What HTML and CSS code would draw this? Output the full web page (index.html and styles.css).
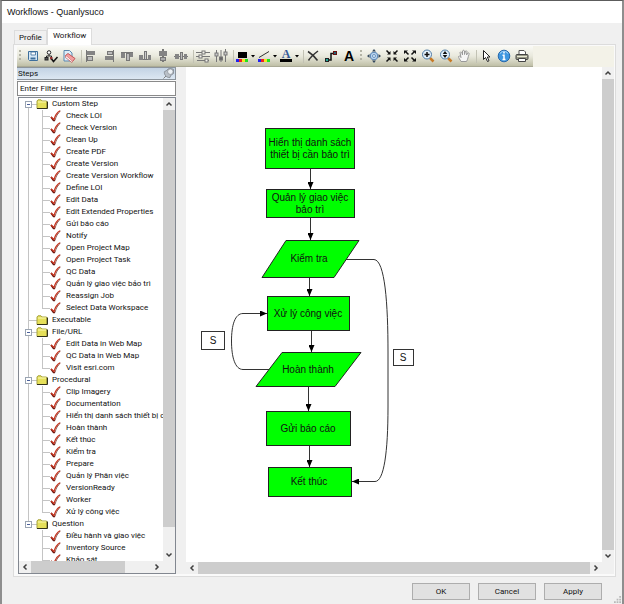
FILE: index.html
```html
<!DOCTYPE html>
<html lang="vi">
<head>
<meta charset="utf-8">
<meta name="viewport" content="width=device-width, initial-scale=1">
<title>Workflows - Quanlysuco</title>
<link rel="stylesheet" href="styles.css">
</head>
<body>
	<!-- shared icons -->
	<svg class="defs" width="0" height="0">
		<symbol id="check" viewBox="0 0 11 12">
			<path d="M1 7 L3.500 10.500 L5 10.500" fill="none" stroke="#5a1410" stroke-width="1.500"/>
			<path d="M1 7 L4 9.500 C5 6 7 2.500 10 .8" fill="none" stroke="#c8321c" stroke-width="1.300"/>
			<path d="M5 10.500 C6 6.500 7.500 3.500 10.500 1" fill="none" stroke="#6b2318" stroke-width=".7"/>
		</symbol>
		<symbol id="folder" viewBox="0 0 12 10">
			<path d="M1 9.500 V2 L2 .8 H5 L6 2 H10.500 V9" fill="#e6e05a" stroke="#a8a440" stroke-width="1"/>
			<path d="M2 3 H10" stroke="#fbf9b0"/>
			<path d="M1 9.500 H11.500 V2.500" fill="none" stroke="#33321a"/>
		</symbol>
		<symbol id="up" viewBox="0 0 12 12"><path d="M3.500 7.500 L6 5 L8.500 7.500" fill="none" stroke="#404040" stroke-width="1.500"/></symbol>
		<symbol id="down" viewBox="0 0 12 12"><path d="M3.500 4.500 L6 7 L8.500 4.500" fill="none" stroke="#404040" stroke-width="1.500"/></symbol>
		<symbol id="left" viewBox="0 0 12 12"><path d="M7.500 3.500 L5 6 L7.500 8.500" fill="none" stroke="#404040" stroke-width="1.500"/></symbol>
		<symbol id="right" viewBox="0 0 12 12"><path d="M4.500 3.500 L7 6 L4.500 8.500" fill="none" stroke="#404040" stroke-width="1.500"/></symbol>
	</svg>

	<div class="window">
		<h1 class="title">Workflows - Quanlysuco</h1>

		<div class="tabs" role="tablist">
			<button class="tab" role="tab">Profile</button>
			<button class="tab active" role="tab" aria-selected="true">Workflow</button>
		</div>

		<div class="page">
			<div class="toolbarRow">
			<div class="toolbar" role="toolbar">
				<span class="grip"></span>
				<button aria-label="Save"><svg viewBox="0 0 14 14"><path d="M2.500 2.500 H11.500 V11.500 H3.500 L2.500 10.500 Z" fill="#d5e7f5" stroke="#3d6f9c"/><path d="M5 3 H9.500 V6 H5 Z" fill="#fff" stroke="#3d6f9c" stroke-width=".8"/><path d="M4.500 9.500 H9.500" stroke="#3d6f9c" stroke-width="2"/></svg></button>
				<button aria-label="Validate"><svg viewBox="0 0 14 14"><circle cx="5" cy="3.500" r="1.800" fill="#fff" stroke="#222"/><path d="M5 5.500 V7 M2.500 9 V7 H7.500 V9" fill="none" stroke="#222"/><rect x="1" y="8.500" width="3" height="2.500" fill="#555" stroke="#222"/><rect x="6" y="8" width="2.500" height="2.500" fill="#933"/><path d="M7.500 10 L9.500 12.500 L13.500 8" fill="none" stroke="#111" stroke-width="1.500"/></svg></button>
				<button aria-label="Erase"><svg viewBox="0 0 14 14"><path d="M2 1.500 H7.500 L10 4 V12 H2 Z" fill="#dcecf8" stroke="#5b87ae"/><path d="M3.500 6.500 L6 4.500 L13 9.500 L10.500 12.500 Z" fill="#f3a0a0" stroke="#bf4a4a" stroke-width=".9"/><path d="M3.500 6.500 V8.500 L10 13.500 L10.500 12.500" fill="#fff" stroke="#bf4a4a" stroke-width=".7"/></svg></button>
				<span class="sep"></span>
				<button aria-label="Align left"><svg viewBox="0 0 14 14"><path d="M2.500 1 V13" stroke="#777"/><rect x="3" y="2" width="8" height="4" fill="#848484"/><rect x="3.500" y="7.500" width="5" height="4" fill="#bbb" stroke="#777"/></svg></button>
				<button aria-label="Align right"><svg viewBox="0 0 14 14"><path d="M11.500 1 V13" stroke="#777"/><rect x="5.500" y="2.500" width="5" height="3" fill="#bbb" stroke="#777"/><rect x="3" y="7" width="8" height="4" fill="#848484"/></svg></button>
				<button aria-label="Align top"><svg viewBox="0 0 14 14"><path d="M1 3.500 H13" stroke="#777"/><rect x="1" y="4" width="4" height="5" fill="#848484"/><rect x="6.500" y="4.500" width="3" height="7" fill="#bbb" stroke="#777"/><rect x="10" y="4" width="3" height="4" fill="#848484"/></svg></button>
				<button aria-label="Align bottom"><svg viewBox="0 0 14 14"><path d="M1 10.500 H13" stroke="#777"/><rect x="1" y="6" width="4" height="5" fill="#848484"/><rect x="6.500" y="2.500" width="2" height="8" fill="#ccc" stroke="#777"/><rect x="10" y="6" width="3" height="5" fill="#848484"/></svg></button>
				<button aria-label="Align centre"><svg viewBox="0 0 14 14"><path d="M7 0 V13" stroke="#777" stroke-width="2"/><rect x="3" y="2" width="8" height="5" fill="#848484"/><rect x="4.500" y="8.500" width="5" height="3" fill="#aaa" stroke="#777"/></svg></button>
				<button aria-label="Align middle"><svg viewBox="0 0 14 14"><path d="M0 7.500 H14" stroke="#777"/><rect x="1" y="5" width="4" height="5" fill="#848484"/><rect x="6.500" y="3.500" width="2" height="7" fill="#bbb" stroke="#777"/><rect x="10" y="5" width="3" height="5" fill="#848484"/></svg></button>
				<span class="sep"></span>
				<button aria-label="Space horizontally"><svg viewBox="0 0 14 14"><g stroke="#777" fill="#f4f4ec"><path d="M0 3.500 H14 M0 7.500 H14 M1 11.500 H13"/><rect x="6" y="2" width="3" height="3"/><rect x="3" y="6" width="3" height="3"/><rect x="9" y="10" width="3" height="3"/></g></svg></button>
				<button aria-label="Space vertically"><svg viewBox="0 0 14 14"><g stroke="#777" fill="#ccc"><path d="M2.500 1 V13 M7 1 V13 M11.500 0 V13"/><rect x="1" y="4" width="3" height="3"/><rect x="5.500" y="8" width="3" height="3" fill="#666"/><rect x="10" y="3" width="3" height="3"/></g></svg></button>
				<span class="sep"></span>
				<button class="drop" aria-label="Fill colour"><svg viewBox="0 0 20 14"><rect x="3" y="3" width="9" height="6"/><rect x="1" y="10" width="3" height="3" fill="#2020f0"/><rect x="4" y="10" width="3" height="3" fill="#f02020"/><rect x="7" y="10" width="3" height="3" fill="#f0e820"/><rect x="10" y="10" width="3" height="3" fill="#20e020"/><path d="M16 6 H20 L18 8.500 Z"/></svg></button>
				<button class="drop" aria-label="Line colour"><svg viewBox="0 0 20 14"><path d="M2 8.500 L12 2.500" stroke="#333"/><rect x="1" y="10" width="3" height="3" fill="#2020f0"/><rect x="4" y="10" width="3" height="3" fill="#f02020"/><rect x="7" y="10" width="3" height="3" fill="#f0e820"/><rect x="10" y="10" width="3" height="3" fill="#20e020"/><path d="M16 6 H20 L18 8.500 Z"/></svg></button>
				<button class="drop" aria-label="Font colour"><svg viewBox="0 0 20 14"><text class="glyph" x="7" y="9" fill="#355a98">A</text><rect x="1" y="10" width="12" height="3"/><path d="M16 6 H20 L18 8.500 Z"/></svg></button>
				<span class="sep"></span>
				<button aria-label="Delete"><svg viewBox="0 0 14 14"><path d="M2 2.500 C6 5 9 8 11.500 11.500 M12 2 C8 5 4 9 2.500 11.500" fill="none" stroke="#333" stroke-width="1.500"/></svg></button>
				<button aria-label="Connector"><svg viewBox="0 0 14 14"><path d="M4 11 H7 V4.500 H10" fill="none" stroke="#111" stroke-width="1.500"/><rect x="1.500" y="9.500" width="3" height="3" fill="#2a9" stroke="#222"/><rect x="9.500" y="2.500" width="3" height="3" fill="#267" stroke="#611"/></svg></button>
				<button aria-label="Text"><svg viewBox="0 0 14 14"><text class="glyph big" x="7" y="12">A</text></svg></button>
				<span class="grip"></span>
				<button aria-label="Full extent"><svg viewBox="0 0 14 14"><circle cx="7" cy="7" r="3.800" fill="#b9d4ee" stroke="#5481b4"/><circle cx="7" cy="7" r="1.500" fill="#e4f1fb" stroke="#5481b4" stroke-width=".8"/><path d="M7 0 L9 2.500 H5 Z M7 14 L9 11.500 H5 Z M0 7 L2.500 5 V9 Z M14 7 L11.500 5 V9 Z" fill="#34485c"/></svg></button>
				<button aria-label="Fixed zoom in"><svg viewBox="0 0 14 14"><path d="M1.500 1.500 L4 4 M12.500 1.500 L10 4 M1.500 12.500 L4 10 M12.500 12.500 L10 10" stroke="#111" stroke-width="1.500"/><path d="M2 5.500 H5.500 V2 Z M12 5.500 H8.500 V2 Z M2 8.500 H5.500 V12 Z M12 8.500 H8.500 V12 Z" fill="#111"/></svg></button>
				<button aria-label="Fixed zoom out"><svg viewBox="0 0 14 14"><path d="M3 3 L5.500 5.500 M11 3 L8.500 5.500 M3 11 L5.500 8.500 M11 11 L8.500 8.500" stroke="#111" stroke-width="1.500"/><path d="M1 1.500 H5 L1 5 Z M13 1.500 H9 L13 5 Z M1 12.500 H5 L1 9 Z M13 12.500 H9 L13 9 Z" fill="#111"/></svg></button>
				<button aria-label="Zoom in"><svg viewBox="0 0 14 14"><path d="M9 9 L12.500 12.500" stroke="#c77a26" stroke-width="2.500"/><circle cx="6" cy="5.500" r="4.500" fill="#e3f1fb" stroke="#4f7ba6"/><path d="M3.500 5.500 H8.500 M6 3 V8" stroke="#111" stroke-width="1.500"/></svg></button>
				<button aria-label="Zoom"><svg viewBox="0 0 14 14"><path d="M9 9 L12.500 12.500" stroke="#c77a26" stroke-width="2.500"/><circle cx="6" cy="5.500" r="4.500" fill="#e3f1fb" stroke="#4f7ba6"/><path d="M6 2 L8.300 5 H3.700 Z M6 9 L8.300 6 H3.700 Z" fill="#111"/></svg></button>
				<button aria-label="Pan"><svg viewBox="0 0 14 14"><path d="M4 12.500 C3 10.500 1.500 9 1.500 7.500 C2.500 6.500 3.500 7.500 4 8.500 L3 3.500 C3.500 2.500 4.500 3 5 4 L5.500 6 L5.500 2 C6 1 7 1 7.500 2 V5.500 L8.500 2 C9.500 1.500 10 2 10 3 L9.500 6 L11 4 C12 3.500 12.500 4.500 12 5.500 C11 8 11 10 9.500 12.500 Z" fill="#f6f6f6" stroke="#999"/></svg></button>
				<span class="sep"></span>
				<button aria-label="Select"><svg viewBox="0 0 14 14"><path d="M4.500 1.500 V10.500 L6.500 8.500 L8.500 12.500 L10 11.800 L8.300 8 H11 Z" fill="#fff" stroke="#222"/></svg></button>
				<button aria-label="Information"><svg viewBox="0 0 14 14"><circle cx="7" cy="7" r="5.800" fill="#3e97e0" stroke="#2668ab"/><path d="M3 4.500 C5 1.500 9 1.500 11 4.500" fill="none" stroke="#a5d4f8" stroke-width="1.200"/><path d="M7 3 V4.500 M5.500 6.200 H7 V10.500 M5.500 10.500 H8.500" fill="none" stroke="#fff" stroke-width="1.500"/></svg></button>
				<button aria-label="Print"><svg viewBox="0 0 14 14"><path d="M4 6 V1.500 H9 L10.500 3 V6" fill="#fff" stroke="#555"/><rect x="1" y="5.500" width="12" height="5" rx="1" fill="#999a88" stroke="#444"/><path d="M2 7.500 H12" stroke="#e7e7d4"/><path d="M3.500 9.500 H10.500 V12.500 H3.500 Z" fill="#fff" stroke="#444"/></svg></button>
			</div>
			</div>

			<div class="main">
				<div class="steps">
					<div class="stepsHead">
						<h2>Steps</h2>
						<svg class="pin" viewBox="0 0 13 12"><path d="M1 11.500 L4 8.500" stroke="#777"/><path d="M2 4 C1.500 7 4 10.500 8 10.500 L9 8 L12 6 V1.500 L10 .8 H6.500 L4 3 Z" fill="#b9c0c8" stroke="#858c94"/><circle cx="8.500" cy="4" r="3" fill="#eef2f6" stroke="#858c94" stroke-width=".8"/></svg>
					</div>
					<input class="filter" type="text" value="Enter Filter Here" aria-label="Filter">
					<div class="treeBox">
						<div class="treeRow">
							<ul class="tree">
								<li><details open>
									<summary><i></i><svg class="folder"><use href="#folder"/></svg>Custom Step</summary>
									<ul>
										<li><svg><use href="#check"/></svg>Check LOI</li>
										<li><svg><use href="#check"/></svg>Check Version</li>
										<li><svg><use href="#check"/></svg>Clean Up</li>
										<li><svg><use href="#check"/></svg>Create PDF</li>
										<li><svg><use href="#check"/></svg>Create Version</li>
										<li><svg><use href="#check"/></svg>Create Version Workflow</li>
										<li><svg><use href="#check"/></svg>Define LOI</li>
										<li><svg><use href="#check"/></svg>Edit Data</li>
										<li><svg><use href="#check"/></svg>Edit Extended Properties</li>
										<li><svg><use href="#check"/></svg>Gửi báo cáo</li>
										<li><svg><use href="#check"/></svg>Notify</li>
										<li><svg><use href="#check"/></svg>Open Project Map</li>
										<li><svg><use href="#check"/></svg>Open Project Task</li>
										<li><svg><use href="#check"/></svg>QC Data</li>
										<li><svg><use href="#check"/></svg>Quản lý giao việc bảo trì</li>
										<li><svg><use href="#check"/></svg>Reassign Job</li>
										<li><svg><use href="#check"/></svg>Select Data Workspace</li>
									</ul>
								</details></li>
								<li><div class="leaf"><svg class="folder"><use href="#folder"/></svg>Executable</div></li>
								<li><details open>
									<summary><i></i><svg class="folder"><use href="#folder"/></svg>File/URL</summary>
									<ul>
										<li><svg><use href="#check"/></svg>Edit Data in Web Map</li>
										<li><svg><use href="#check"/></svg>QC Data in Web Map</li>
										<li><svg><use href="#check"/></svg>Visit esri.com</li>
									</ul>
								</details></li>
								<li><details open>
									<summary><i></i><svg class="folder"><use href="#folder"/></svg>Procedural</summary>
									<ul>
										<li><svg><use href="#check"/></svg>Clip Imagery</li>
										<li><svg><use href="#check"/></svg>Documentation</li>
										<li><svg><use href="#check"/></svg>Hiển thị danh sách thiết bị cần bảo trì</li>
										<li><svg><use href="#check"/></svg>Hoàn thành</li>
										<li><svg><use href="#check"/></svg>Kết thúc</li>
										<li><svg><use href="#check"/></svg>Kiểm tra</li>
										<li><svg><use href="#check"/></svg>Prepare</li>
										<li><svg><use href="#check"/></svg>Quản lý Phân việc</li>
										<li><svg><use href="#check"/></svg>VersionReady</li>
										<li><svg><use href="#check"/></svg>Worker</li>
										<li><svg><use href="#check"/></svg>Xử lý công việc</li>
									</ul>
								</details></li>
								<li><details open>
									<summary><i></i><svg class="folder"><use href="#folder"/></svg>Question</summary>
									<ul>
										<li><svg><use href="#check"/></svg>Điều hành và giao việc</li>
										<li><svg><use href="#check"/></svg>Inventory Source</li>
										<li><svg><use href="#check"/></svg>Khảo sát</li>
									</ul>
								</details></li>
							</ul>
							<div class="vbar treeV">
								<button aria-label="Scroll up"><svg><use href="#up"/></svg></button>
								<span class="thumb"></span>
								<button aria-label="Scroll down"><svg><use href="#down"/></svg></button>
							</div>
						</div>
						<div class="hbar treeH">
							<button aria-label="Scroll left"><svg><use href="#left"/></svg></button>
							<span class="thumb"></span>
							<button aria-label="Scroll right"><svg><use href="#right"/></svg></button>
						</div>
					</div>
				</div>

				<div class="canvas">
					<div class="canvasRow">
						<div class="sheet">
							<svg class="diagram" width="240" height="440">
								<defs>
									<marker id="arrow" viewBox="0 0 7 6" refX="7" refY="3" markerWidth="7" markerHeight="6" markerUnits="userSpaceOnUse" orient="auto"><path d="M0 0 L7 3 L0 6 Z"/></marker>
								</defs>
								<!-- connectors -->
								<g class="link">
									<path d="M124.500 101 V122"/>
									<path d="M124.500 150 V173"/>
									<path d="M123.500 210 V229"/>
									<path d="M125.500 263 V285"/>
									<path d="M122.500 319 V344"/>
									<path d="M123.500 378 V400"/>
									<path d="M160 192.500 H188 C199 193 202 237 202 285 V340 C202 385 198 414.500 189 414.500 H166"/>
									<path d="M84 302.500 H57 C49 302.500 45.500 290 45.500 274 C45.500 258 49 246.500 57 246.500 H81"/>
								</g>
								<!-- steps -->
								<g class="node">
									<rect x="79.500" y="61.500" width="89" height="40"/>
									<rect x="80.500" y="122.500" width="88" height="28"/>
									<polygon points="100,173.500 173,173.500 148,210.500 76,210.500"/>
									<rect x="81.500" y="229.500" width="82" height="34"/>
									<polygon points="96,285.500 175,285.500 149,319.500 70,319.500"/>
									<rect x="80.500" y="344.500" width="84" height="34"/>
									<rect x="82.500" y="400.500" width="83" height="29"/>
								</g>
								<g class="tag">
									<rect x="15.500" y="264.500" width="23" height="18"/>
									<rect x="207.500" y="282.500" width="20" height="16"/>
								</g>
								<g class="label">
									<text x="124" y="79">Hiển thị danh sách</text>
									<text x="124" y="91">thiết bị cần bảo trì</text>
									<text x="124" y="134">Quản lý giao việc</text>
									<text x="124" y="146">bảo trì</text>
									<text x="123" y="195">Kiểm tra</text>
									<text x="122" y="250">Xử lý công việc</text>
									<text x="122" y="306">Hoàn thành</text>
									<text x="122" y="365">Gửi báo cáo</text>
									<text x="123" y="418">Kết thúc</text>
									<text x="27" y="277">S</text>
									<text x="217" y="294">S</text>
								</g>
							</svg>
						</div>
						<div class="vbar">
							<button aria-label="Scroll up"><svg><use href="#up"/></svg></button>
							<span class="thumb"></span>
							<button aria-label="Scroll down"><svg><use href="#down"/></svg></button>
						</div>
					</div>
					<div class="hbar canvasH">
						<button aria-label="Scroll left"><svg><use href="#left"/></svg></button>
						<span class="thumb"></span>
						<button aria-label="Scroll right"><svg><use href="#right"/></svg></button>
					</div>
				</div>
			</div>
		</div>

		<div class="footer">
			<button>OK</button>
			<button>Cancel</button>
			<button>Apply</button>
		</div>
		<svg class="sizer" viewBox="0 0 8 8"><path d="M6 0 H8 V2 H6 Z M3 3 H5 V5 H3 Z M6 3 H8 V5 H6 Z M0 6 H2 V8 H0 Z M3 6 H5 V8 H3 Z M6 6 H8 V8 H6 Z" fill="#b8b8b8"/></svg>
	</div>
</body>
</html>
```

FILE: styles.css
```css
:root {
	--face:#f0f0f0;
	--line:#dcdcdc;
	--thumb:#cdcdcd;
	--tree-line:#c4c4c4;
	--green:#00ff00;
}

* {
	box-sizing:border-box;
}

html, body {
	margin:0;
	height:100vh;
}

body {
	font-family:Roboto, Arial, sans-serif;
	font-size:8px;
	line-height:12px;
	color:#111;
}

button {
	font:inherit;
	color:inherit;
	padding:0;
	border:none;
	background:none;
}

ul {
	list-style:none;
	margin:0;
	padding:0;
}

.defs {
	position:absolute;
}

.window {
	position:relative;
	display:flex;
	flex-direction:column;
	height:100%;
	background-color:var(--face);
	border:2px solid #8e8e8e;
	border-top:1px solid #5c5c5c;
	border-bottom:none;
}

.title {
	margin:0;
	padding:5px;
	font-family:"Liberation Sans", Arial, sans-serif;
	font-size:9px;
	font-weight:normal;
	background-color:white;
}

/* tabs */
.tabs {
	display:flex;
	align-items:flex-end;
	padding:5px 12px 0;
}

.tab {
	height:14px;
	padding:0 4px;
	border:1px solid var(--line);
	border-bottom:none;
}

.tab.active {
	height:17px;
	padding:0 5px 2px;
	background-color:white;
	position:relative;
	margin-bottom:-1px;
}

.page {
	flex:1;
	min-height:0;
	display:flex;
	flex-direction:column;
	margin:0 6px 0 11px;
	padding:1px 1px 2px 3px;
	border:1px solid var(--line);
	background-color:#fafafa;
}

/* toolbar */
.toolbarRow {
	display:flex;
	background-color:#f3f2e8;
}

.toolbar {
	display:flex;
	align-items:center;
	height:21px;
	padding-right:2px;
	background-image:linear-gradient(#fafaf6, #e9e9dd 50%, #bfbfa6);
	border-bottom:1px solid #a9a994;
}

.toolbar button {
	display:flex;
	justify-content:center;
	width:18px;
}

.toolbar svg {
	width:14px;
	height:14px;
}

.toolbar .drop {
	width:22px;
}

.toolbar .drop svg {
	width:20px;
}

.sep {
	width:4px;
	height:13px;
	border-right:1px solid #c2c2b4;
}

.grip {
	width:3px;
	height:12px;
	margin:0 2px;
	background-image:repeating-linear-gradient(#b4b4a6 0 2px, transparent 2px 4px);
	background-size:2px 100%;
	background-repeat:no-repeat;
}

.glyph {
	font-family:"Liberation Serif", serif;
	font-size:12px;
	font-weight:bold;
	text-anchor:middle;
}

.toolbar svg {
	overflow:visible;
}

.glyph.big {
	font-family:"Liberation Sans", sans-serif;
	font-size:14px;
}

.main {
	flex:1;
	min-height:0;
	display:flex;
	gap:10px;
	background-color:var(--face);
}

/* steps panel */
.steps {
	display:flex;
	flex-direction:column;
	flex:0 0 159px;
	min-width:0;
	background-color:#fafafa;
}

.stepsHead {
	display:flex;
	justify-content:space-between;
	height:13px;
	border:1px solid #8c949c;
	border-left:none;
	background-image:linear-gradient(#c3d3e4, #dce7f2);
}

.stepsHead h2 {
	margin:0;
	padding-left:1px;
	font-size:8px;
	font-weight:normal;
	line-height:11px;
}

.pin {
	width:13px;
	height:11px;
}

.filter {
	margin:1px 0;
	padding:0 2px;
	width:100%;
	height:15px;
	border:1px solid #8a8a8a;
	font:inherit;
	color:inherit;
	background-color:white;
}

.treeBox {
	flex:1;
	min-height:0;
	display:flex;
	flex-direction:column;
	margin-left:1px;
	border:1px solid #828790;
	background-color:white;
}

.treeRow, .canvasRow {
	flex:1;
	min-height:0;
	display:flex;
}

.tree {
	flex:1;
	min-width:0;
	overflow:hidden;
	padding-left:6px;
	white-space:nowrap;
}

/* connecting lines are drawn as backgrounds of the rows */
.tree > li {
	background:linear-gradient(var(--tree-line), var(--tree-line)) 3px 0 / 1px 100% no-repeat;
}

.tree > li:first-child {
	background-position:3px 6px;
}

.tree > li:last-child {
	background-size:1px 6px;
}

.tree summary, .leaf {
	display:flex;
	align-items:center;
	height:12px;
	background:linear-gradient(var(--tree-line), var(--tree-line)) 3px 6px / 9px 1px no-repeat;
}

.leaf {
	padding-left:7px;
}

.tree i {
	width:7px;
	height:7px;
	border:1px solid #9aa4b2;
	background:linear-gradient(#4a5f9a, #4a5f9a) center / 3px 1px no-repeat white;
}

.folder {
	width:12px;
	height:10px;
	margin:0 4px;
}

.tree ul {
	padding-left:17px;
}

.tree ul li {
	display:flex;
	align-items:center;
	gap:5px;
	height:12px;
	padding-left:8px;
	background:
		linear-gradient(var(--tree-line), var(--tree-line)) 0 0 / 1px 100% no-repeat,
		linear-gradient(var(--tree-line), var(--tree-line)) 0 6px / 8px 1px no-repeat;
}

.tree ul li:last-child {
	background-size:1px 6px, 8px 1px;
}

.tree ul svg {
	flex:none;
	width:11px;
	height:12px;
}

/* scrollbars */
.vbar, .hbar {
	display:flex;
	flex:none;
	background-color:var(--face);
}

.vbar {
	flex-direction:column;
	width:12px;
}

.hbar {
	height:12px;
}

.vbar button, .hbar button {
	flex:none;
	width:12px;
	height:12px;
}

.vbar svg, .hbar svg {
	display:block;
	width:12px;
	height:12px;
}

.thumb {
	flex:1;
	background-color:var(--thumb);
}

.treeV .thumb {
	flex:0 1 90%;
}

.treeV button:last-child {
	margin-top:auto;
}

.treeH {
	padding-right:12px;
}

.treeH .thumb {
	flex:0 0 65%;
}

.treeH button:last-child {
	margin-left:auto;
}

.canvasH {
	padding-right:12px;
}

/* workflow canvas */
.canvas {
	flex:1;
	min-width:0;
	display:flex;
	flex-direction:column;
}

.sheet {
	flex:1;
	min-width:0;
	overflow:hidden;
	background-color:white;
}

.diagram {
	display:block;
}

.link path {
	fill:none;
	stroke:#333;
	marker-end:url(#arrow);
}

.node {
	fill:var(--green);
	stroke:#222;
}

.tag {
	fill:white;
	stroke:#333;
}

.label {
	font-family:"Liberation Sans", Arial, sans-serif;
	font-size:10px;
	text-anchor:middle;
	fill:#111;
}

/* dialog buttons */
.footer {
	display:flex;
	justify-content:flex-end;
	gap:8px;
	padding:6px 20px 4px;
}

.footer button {
	width:58px;
	height:17px;
	border:1px solid #adadad;
	background-color:#e1e1e1;
}

.sizer {
	position:absolute;
	right:1px;
	bottom:1px;
	width:7px;
	height:7px;
}
```
